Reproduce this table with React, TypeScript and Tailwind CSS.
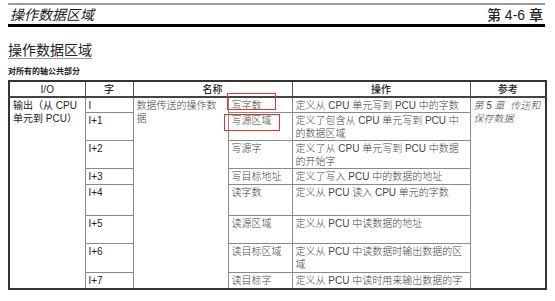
import React from "react";

const sans = "font-['Liberation_Sans','Noto_Sans_CJK_SC',sans-serif]";

type Row = { word: string; name: string; op: string[]; h: string };

const rows: Row[] = [
  { word: "I", name: "写字数", op: ["定义从 CPU 单元写到 PCU 中的字数"], h: "h-[15px]" },
  { word: "I+1", name: "写源区域", op: ["定义了包含从 CPU 单元写到 PCU 中", "的数据区域"], h: "h-[27px]" },
  { word: "I+2", name: "写源字", op: ["定义了从 CPU 单元写到 PCU 中数据", "的开始字"], h: "h-[26px]" },
  { word: "I+3", name: "写目标地址", op: ["定义了写入 PCU 中的数据的地址"], h: "h-[16px]" },
  { word: "I+4", name: "读字数", op: ["定义从 PCU 读入 CPU 单元的字数"], h: "h-[31px]" },
  { word: "I+5", name: "读源区域", op: ["定义从 PCU 中读数据的地址"], h: "h-[28px]" },
  { word: "I+6", name: "读目标区域", op: ["定义从 PCU 中读数据时输出数据的区", "域"], h: "h-[29px]" },
  { word: "I+7", name: "读目标字", op: ["定义从 PCU 中读时用来输出数据的字"], h: "h-[16px]" },
];

export default function App() {
  const cell = "border border-[#8a8a8a] align-top px-[3px] pt-[1px] leading-[13px]";
  const head = "border border-[#555] border-b-2 border-b-[#444] font-medium text-center leading-[13px]";

  return (
    <div className={`relative w-[555px] h-[301px] bg-white overflow-hidden px-2 ${sans}`}>
      {/* page header */}
      <div className="mt-[3px] w-[537px] border-t-2 border-b-[3px] border-t-[#9a9a9a] border-b-black h-[24px] flex items-center justify-between px-[2px]">
        <span className="italic text-[14px] leading-[16px] text-[#222]">操作数据区域</span>
        <span className="text-[14px] leading-[16px] font-medium text-[#222]">第 4-6 章</span>
      </div>

      <div className="mt-[15px] text-[14px] leading-[16px] text-[#222] underline decoration-[#999] underline-offset-[3px]">
        操作数据区域
      </div>
      <div className="mt-[8px] text-[8px] leading-[12px] font-semibold text-[#222]">对所有的轴公共部分</div>

      {/* table */}
      <table className="mt-[2px] w-[537px] table-fixed border-collapse border-2 border-[#333] text-[10px] text-[#222]">
        <colgroup>
          <col className="w-[76px]" />
          <col className="w-[48px]" />
          <col className="w-[95px]" />
          <col className="w-[64px]" />
          <col className="w-[178px]" />
          <col className="w-[76px]" />
        </colgroup>
        <thead>
          <tr className="h-[16px]">
            <th className={head}>I/O</th>
            <th className={head}>字</th>
            <th colSpan={2} className={head}>名称</th>
            <th className={head}>操作</th>
            <th className={head}>参考</th>
          </tr>
        </thead>
        <tbody>
          {rows.map((r, i) => (
            <tr key={r.word} className={r.h}>
              {i === 0 && (
                <td rowSpan={8} className={cell}>
                  输出（从 CPU
                  <br />
                  单元到 PCU）
                </td>
              )}
              <td className={cell}>{r.word}</td>
              {i === 0 && (
                <td rowSpan={8} className={`${cell} font-light text-[#444]`}>
                  数据传送的操作数
                  <br />
                  据
                </td>
              )}
              <td className={`${cell} font-light text-[#444]`}>{r.name}</td>
              <td className={`${cell} font-light text-[#444]`}>
                {r.op.map((l, j) => (
                  <div key={j}>{l}</div>
                ))}
              </td>
              {i === 0 && (
                <td rowSpan={8} className={`${cell} italic font-light text-[#444]`}>
                  第 5 章&nbsp; 传送和
                  <br />
                  保存数据
                </td>
              )}
            </tr>
          ))}
        </tbody>
      </table>

      {/* red highlight boxes */}
      <div className="absolute left-[227px] top-[93px] w-[49px] h-[17px] border border-[#e8332f]" />
      <div className="absolute left-[224px] top-[114px] w-[56px] h-[17px] border border-[#e8332f]" />
    </div>
  );
}
